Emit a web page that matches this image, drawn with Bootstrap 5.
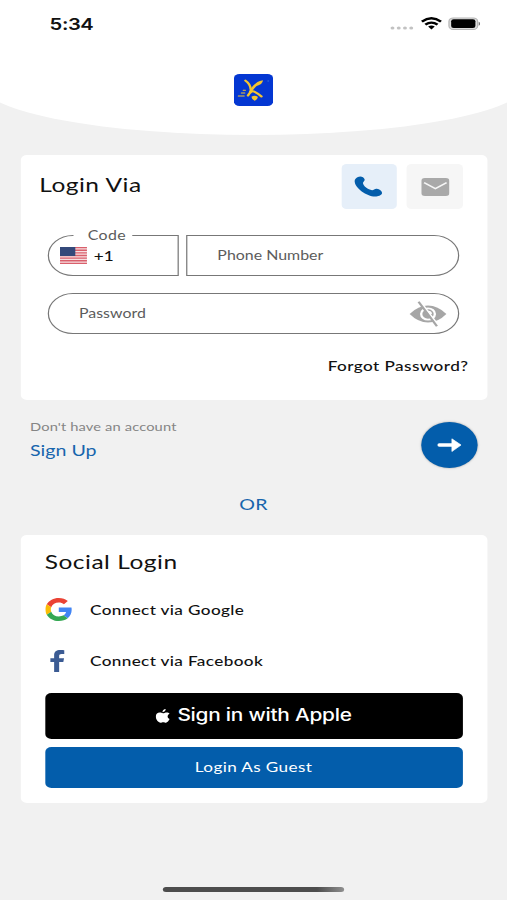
<!DOCTYPE html>
<html lang="en">
<head>
<meta charset="utf-8">
<meta name="viewport" content="width=device-width, initial-scale=1">
<title>Login</title>
<link href="https://cdn.jsdelivr.net/npm/bootstrap@5.3.0/dist/css/bootstrap.min.css" rel="stylesheet">
<style>
  html, body { overflow: hidden; }
  body { background: #f1f1f1; font-family: Lato, "Open Sans", sans-serif; color: #111; }
  .screen { width: 414px; height: 900px; transform: scaleX(1.22464); transform-origin: 0 0; line-height: 1; letter-spacing: .3px; }
  .screen svg { display: block; flex: none; }
  .top { height: 135px; z-index: 0; }
  .top::before { content: ""; position: absolute; z-index: -1; left: -15px; right: -15px; top: 0; bottom: 0; background: #fff; border-radius: 0 0 50% 50% / 0 0 51px 51px; }
  .status { height: 47px; padding: 0 22px 0 40.5px; }
  .clock { font: 600 16.5px/1 Inter, sans-serif; letter-spacing: -.35px; padding-top: 2px; }
  .logo { margin-top: 27px; }
  .panel { background: #fff; border-radius: 5px; margin: 0 16.5px; }
  .login { margin-top: 20px; height: 245px; padding: 9px 19.5px 0 15.5px; }
  .title { font-size: 20px; letter-spacing: .42px; }
  .login-title { padding-top: 10px; }
  .tab { width: 45.7px; height: 45px; border-radius: 4px; background: #f6f6f6; }
  .tab.on { background: #e6eff9; }
  .fields { margin: 26px 3px 0 7px; }
  .field { height: 41px; border: 1px solid #777; font-size: 13px; color: #5c5c5c; letter-spacing: 0; }
  .code { width: 107px; border-radius: 21px 0 0 21px; padding-left: 9px; }
  .code-label { left: 20px; width: 48px; padding-left: 6.5px; top: -7px; background: #fff; letter-spacing: .25px; }
  .flag { margin-right: 5.5px; }
  .dial { color: #111; font-size: 14px; font-weight: 500; }
  .phone { border-radius: 0 21px 21px 0; padding-left: 24.5px; margin-left: 6px; }
  .pass { border-radius: 21px; margin-top: 17px; padding: 0 9px 0 24.5px; }
  .forgot { font-size: 14px; font-weight: 500; letter-spacing: .35px; margin: 25px -7.5px 0 0; }
  .signup { margin: 0 24px 0 24.5px; height: 89px; }
  .signup-text { margin-bottom: 11px; }
  .hint { font-size: 12px; color: #858585; letter-spacing: .1px; margin-bottom: 9px; }
  .blue { color: #1765ad; }
  .link-text { font-size: 16px; letter-spacing: 0; }
  .go { width: 46.5px; height: 46px; background: #035dab; box-shadow: 0 0 2px rgba(0,0,0,.35); }
  .or { height: 30px; font-size: 16px; padding-bottom: 1px; }
  .social { margin-top: 16px; height: 268px; padding: 16px 20px 0 20px; }
  .providers { margin-top: 13px; }
  .provider { height: 51px; font-size: 14px; font-weight: 500; }
  .provider-icon { width: 37px; }
  .fb { margin-left: 4.5px; }
  .bar { border-radius: 5px; color: #fff; }
  .apple { height: 46px; background: #000; font: 500 17px/1 Inter, sans-serif; letter-spacing: -.2px; margin-top: 6.5px; }
  .apple svg { margin-right: 6px; }
  .guest { height: 41px; background: #035dab; font-size: 14px; margin-top: 8px; padding-bottom: 1px; }
  .home { width: 147.5px; height: 5px; border-radius: 3px; background: linear-gradient(90deg, #4d4d4d 85%, #8f8f8f); margin: 84px auto 0; }
</style>
</head>
<body>
<main class="screen">
  <header class="top position-relative overflow-hidden">
    <div class="status d-flex align-items-center justify-content-between">
      <span class="clock">5:34</span>
      <svg width="74" height="14" viewBox="0 0 74 14">
        <g fill="#c2c2c2"><circle cx="2.5" cy="11" r="1.6"/><circle cx="7.6" cy="11" r="1.6"/><circle cx="12.7" cy="11" r="1.6"/><circle cx="17.8" cy="11" r="1.6"/></g>
        <g fill="none" stroke="#000" stroke-width="2.3"><path d="M26.5 4.6Q34.300-2 42.100 4.600"/><path d="M29.300 7.700Q34.300 3.600 39.300 7.700"/></g>
        <path d="M34.300 12.500 31.600 9.600Q34.300 7.400 37 9.600Z"/>
        <rect x="48.600" y=".9" width="23.400" height="11.600" rx="3.600" fill="#ddd" stroke="#b5b5b5"/>
        <rect x="50.400" y="2.300" width="19.800" height="8.800" rx="2"/>
        <path d="M72.900 4.700q1.200.7 1.200 2t-1.200 2z" fill="#777"/>
      </svg>
    </div>
    <svg class="logo mx-auto" width="32" height="32" viewBox="0 0 32 32">
      <rect width="32" height="32" rx="4.500" fill="#0437d2"/>
      <g fill="none" stroke="#f4c42f" stroke-linecap="round">
        <path d="M9.300 6.500Q13.500 10 13.700 15.500" stroke-width="1.900"/>
        <path d="M13.500 17.500Q16 12.500 19 9.800" stroke-width="2.400"/>
        <path d="M11.500 21.500Q14 16 17 17.800T22.500 22.500" stroke-width="2"/>
        <path d="M7.500 16.200h2M6 19h3M3.500 22h5" stroke-width=".9"/>
      </g>
      <path d="M17.500 12Q18 7 23.700 6.200 23.800 11 17.500 12M14.300 22.800q2.600-2.300 5.200 0 0 2.700-2.600 4-2.400-1.300-2.600-4" fill="#f4c42f"/>
      <circle cx="28" cy="7" r=".8" fill="#2b63d8"/>
    </svg>
  </header>

  <section class="panel login">
    <div class="d-flex align-items-start">
      <div class="title login-title me-auto">Login Via</div>
      <div class="tab on d-flex align-items-center justify-content-center">
        <svg width="24" height="22" viewBox="0 0 24 22"><path d="M3.300 1.100C5.500-.3 8.200 1.200 8.700 3.300c.4 1.700-1.300 2.600-1.300 3.800 0 2.800 4.300 6.800 7.400 7.100 1.400.1 2.100-1.700 4-1.400 2.100.4 4.100 2.300 4.200 4.300 0 1.700-2.400 3.100-4.700 3.400C11.300 21.400.8 12.500.6 5.300.5 3.600 1.700 2.100 3.300 1.100Z" fill="#035dab"/></svg>
      </div>
      <div class="tab d-flex align-items-center justify-content-center ms-2">
        <svg width="23" height="18" viewBox="0 0 23 18"><rect width="23" height="18" rx="3" fill="#a9a9a9"/><path d="M2.300 4.600 11.500 10.600 20.700 4.600" fill="none" stroke="#f6f6f6" stroke-width="1.500"/></svg>
      </div>
    </div>
    <div class="fields">
      <div class="d-flex">
        <div class="field code position-relative d-flex align-items-center">
          <span class="code-label position-absolute text-center">Code</span>
          <svg class="flag" width="22" height="17" viewBox="0 0 22 17">
            <path fill="#f7dfe1" d="M0 0h22v17H0z"/>
            <path stroke="#d9606c" stroke-width="1.300" d="M0 .65h22M0 3.270h22M0 5.890h22M0 8.510h22M0 11.130h22M0 13.750h22M0 16.350h22"/>
            <path fill="#34497a" d="M0 0h12.500v9H0z"/>
          </svg>
          <span class="dial">+1</span>
        </div>
        <div class="field phone flex-grow-1 d-flex align-items-center">Phone Number</div>
      </div>
      <div class="field pass d-flex align-items-center justify-content-between">
        <span>Password</span>
        <svg width="31" height="26" viewBox="0 0 31 26">
          <path d="M.5 13Q7.500 4.500 15.500 4.500T30.500 13Q23.500 21.500 15.500 21.500T.5 13Z" fill="#a6a6a6"/>
          <circle cx="15.500" cy="13" r="5.600" fill="none" stroke="#fff" stroke-width="1.900"/>
          <path d="M15.500 10.500a2.500 2.500 0 0 1 2.500 2.500" fill="none" stroke="#fff" stroke-width="1.400"/>
          <path d="M9.300.5 24.300 25" stroke="#fff" stroke-width="1.500"/>
          <path d="M7.800.8 22.800 25.300" stroke="#a6a6a6" stroke-width="1.900"/>
        </svg>
      </div>
      <div class="forgot text-end">Forgot Password?</div>
    </div>
  </section>

  <section class="signup d-flex align-items-center justify-content-between">
    <div class="signup-text">
      <div class="hint">Don't have an account</div>
      <div class="blue link-text">Sign Up</div>
    </div>
    <div class="go rounded-circle d-flex align-items-center justify-content-center">
      <svg width="20" height="14" viewBox="0 0 20 14"><path d="M1.800 7H14" stroke="#fff" stroke-width="3.400" stroke-linecap="round"/><path d="M12 .8 19.500 7 12 13.500Z" fill="#fff" stroke="#fff" stroke-width=".6" stroke-linejoin="round"/></svg>
    </div>
  </section>
  <div class="or blue d-flex align-items-center justify-content-center">OR</div>

  <section class="panel social">
    <div class="title">Social Login</div>
    <div class="providers">
      <div class="provider d-flex align-items-center">
        <span class="provider-icon"><svg width="22" height="23" viewBox="0 0 48 48" preserveAspectRatio="none">
          <path fill="#ea4335" d="M24 9.500c3.540 0 6.710 1.220 9.210 3.600l6.850-6.850C35.900 2.380 30.470 0 24 0 14.620 0 6.510 5.380 2.560 13.220l7.980 6.190C12.430 13.720 17.740 9.500 24 9.500z"/>
          <path fill="#4285f4" d="M46.980 24.550c0-1.570-.15-3.090-.38-4.550H24v9.020h12.940c-.58 2.960-2.260 5.480-4.780 7.180l7.730 6c4.510-4.180 7.090-10.360 7.090-17.650z"/>
          <path fill="#fbbc05" d="M10.530 28.590c-.48-1.450-.76-2.990-.76-4.590s.27-3.140.76-4.590l-7.980-6.190C.92 16.460 0 20.120 0 24c0 3.880.92 7.540 2.560 10.780l7.970-6.190z"/>
          <path fill="#34a853" d="M24 48c6.480 0 11.930-2.130 15.890-5.810l-7.730-6c-2.150 1.450-4.920 2.300-8.160 2.300-6.260 0-11.570-4.220-13.470-9.910l-7.980 6.190C6.510 42.620 14.620 48 24 48z"/>
        </svg></span>
        <span>Connect via Google</span>
      </div>
      <div class="provider d-flex align-items-center">
        <span class="provider-icon"><svg class="fb" width="12" height="22" viewBox="0 0 12 22"><path fill="#3b5b93" d="M3.200 22V12H0V8.200h3.200V5.200C3.200 1.900 5 .1 8.200.1c1.500 0 3.300.2 3.300.2v3.600H9.300c-1.500 0-2 .8-2 1.900v2.400h4L10.700 12H7.300v10z"/></svg></span>
        <span>Connect via Facebook</span>
      </div>
    </div>
    <div class="bar apple d-flex align-items-center justify-content-center">
      <svg width="12" height="14" viewBox="0 0 12 14"><path fill="#fff" d="M8.300.1c.1 1.700-1.200 3.100-2.600 3.100C5.500 1.700 6.800.3 8.300.1M11.500 10.100c-.7 1.900-1.900 3.600-3 3.600-.9 0-1.200-.5-2.200-.5s-1.400.5-2.200.5C2.300 13.700.2 10.500.2 7.600c0-2.500 1.500-4 3.200-4 1.100 0 1.900.7 2.700.7s1.700-.8 3-.8c1 0 1.900.5 2.400 1.300-2.300 1.400-2 4.400 0 5.300"/></svg>
      <span>Sign in with Apple</span>
    </div>
    <div class="bar guest d-flex align-items-center justify-content-center">Login As Guest</div>
  </section>
  <div class="home"></div>
</main>
<script src="https://cdn.jsdelivr.net/npm/bootstrap@5.3.0/dist/js/bootstrap.bundle.min.js"></script>
</body>
</html>
